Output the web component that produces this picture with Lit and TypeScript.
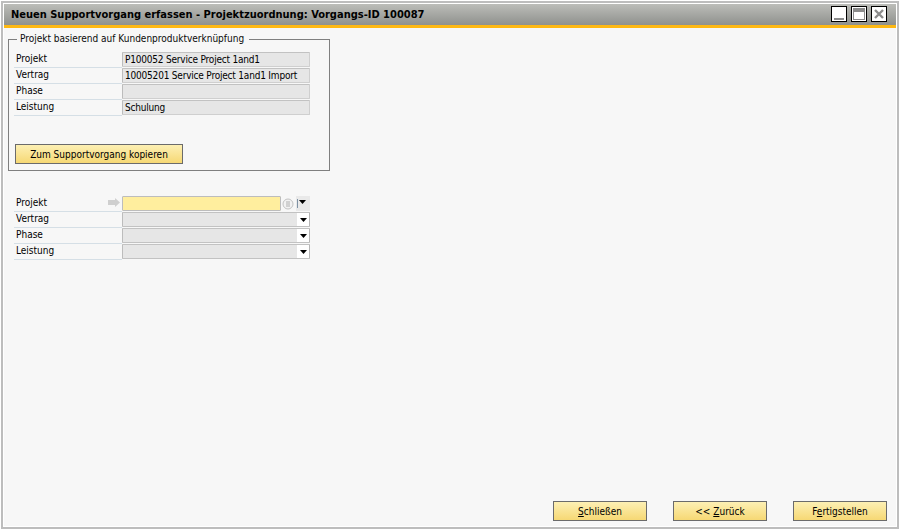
import { LitElement, html, css } from "lit";
import { customElement } from "lit/decorators.js";

const arrow = html`<svg class="dd" width="7" height="4" viewBox="0 0 7 4"><path d="M0 0H7L3.5 4Z" fill="#000"/></svg>`;

@customElement("app-root")
export class AppRoot extends LitElement {
  static styles = css`
    :host { display: block; width: 900px; height: 530px; background: #fff; font-family: "DejaVu Sans Condensed", "DejaVu Sans", sans-serif; font-stretch: condensed; font-size: 10px; color: #000; }
    * { box-sizing: border-box; }
    .win { width: 898px; height: 528px; margin: 1px 0 0 1px; border: 2px solid #bdbdbd; padding: 1px 1px 1px 1px; display: flex; flex-direction: column; background: #fff; }
    .title { height: 24px; flex: none; background: linear-gradient(#bcbdb9, #8f918d); border-bottom: 3px solid #fdb813; display: flex; align-items: center; padding: 0 9px 0 7px; }
    .title h1 { margin: 0; flex: 1; font-size: 11px; font-weight: bold; white-space: nowrap; }
    .wb { display: flex; gap: 4px; margin-top: -1px; }
    .wb svg { display: block; }
    .body { flex: 1; background: #f7f7f7; display: flex; flex-direction: column; padding: 5px 8px 5px 4px; }
    fieldset { margin: 0; width: 322px; height: 138px; border: 1px solid #7f7f7f; padding: 7px 19px 0 5px; display: flex; flex-direction: column; }
    legend { margin-left: 3px; padding: 0 5px 0 3px; color: #0a0a0a; font-size: 10px; line-height: 12px; }
    .row { display: flex; height: 16px; }
    .lab { width: 108px; padding: 0 0 0 2px; border-bottom: 1px solid #d5dfe6; line-height: 13px; display: flex; justify-content: space-between; }
    .fld { width: 188px; height: 15px; background: #e6e6e6; border: 1px solid #cfcfcf; border-top-color: #c2c2c2; border-left-color: #bcbcbc; border-radius: 1px; padding: 0 2px; line-height: 13px; letter-spacing: -0.2px; white-space: nowrap; overflow: hidden; position: relative; }
    .copy { margin-top: 28px; margin-left: 1px; }
    .btn { width: 168px; height: 20px; border: 1px solid #6b6b6b; background: linear-gradient(#fdf0b4, #f6d874); display: flex; align-items: center; justify-content: center; font-size: 10px; }
    .form { margin-top: 25px; margin-left: 6px; width: 296px; display: flex; flex-direction: column; }
    .gold { background: #ffee9e; border-color: #bdbdbd; width: 159px; }
    .sel { padding-right: 0; border-right-color: #b5b5b5; border-bottom-color: #c2c2c2; }
    .drop { position: absolute; right: 0; top: 0; width: 12px; height: 13px; background: #fff; display: flex; align-items: center; justify-content: center; }
    .dd { display: block; }
    .tools { width: 29px; height: 15px; display: flex; align-items: center; background: linear-gradient(90deg, #f7f7f7 50%, #e9e9e9 50%); }
    .tools .ic { margin-left: 1px; }
    .tools .bar { width: 1px; height: 9px; background: #7f93a5; margin: -1px 1px 0 3px; }
    .tools .dd { margin-top: -3px; }
    .foot { margin-top: auto; display: flex; justify-content: flex-end; gap: 26px; padding-right: 1px; }
    .foot .btn { width: 94px; }
    .arr { margin: 2px 2px 0 0; }
    u { text-underline-offset: 1px; }
  `;
  row(label: string, val: string) {
    return html`<div class="row"><div class="lab">${label}</div><div class="fld">${val}</div></div>`;
  }
  sel(label: string) {
    return html`<div class="row"><div class="lab">${label}</div><div class="fld sel"><span class="drop">${arrow}</span></div></div>`;
  }
  render() {
    return html`<div class="win">
      <div class="title">
        <h1>Neuen Supportvorgang erfassen - Projektzuordnung: Vorgangs-ID 100087</h1>
        <div class="wb">
          <svg width="16" height="16" viewBox="0 0 16 16"><rect x=".5" y=".5" width="15" height="15" fill="#fff" stroke="#000"/><rect x="3" y="12" width="10" height="2" fill="#8c8c8c"/></svg>
          <svg width="16" height="16" viewBox="0 0 16 16"><rect x=".5" y=".5" width="15" height="15" fill="#fff" stroke="#000"/><rect x="2.5" y="2.5" width="11" height="11" fill="#fff" stroke="#8c8c8c"/><rect x="3" y="3" width="10" height="3" fill="#8c8c8c"/></svg>
          <svg width="16" height="16" viewBox="0 0 16 16"><rect x=".5" y=".5" width="15" height="15" fill="#fff" stroke="#000"/><path d="M4 4L12 12M12 4L4 12" stroke="#8c8c8c" stroke-width="2.4"/></svg>
        </div>
      </div>
      <div class="body">
        <fieldset>
          <legend>Projekt basierend auf Kundenproduktverknüpfung</legend>
          ${this.row("Projekt", "P100052 Service Project 1and1")}
          ${this.row("Vertrag", "10005201 Service Project 1and1 Import")}
          ${this.row("Phase", "")}
          ${this.row("Leistung", "Schulung")}
          <div class="btn copy">Zum Supportvorgang kopieren</div>
        </fieldset>
        <div class="form">
          <div class="row">
            <div class="lab">Projekt
              <svg class="arr" width="12" height="9" viewBox="0 0 12 9"><path d="M0 2H7V0L12 4.5L7 9V7H0Z" fill="#cfcfcf"/></svg>
            </div>
            <div class="fld gold"></div>
            <div class="tools">
              <svg class="ic" width="12" height="12" viewBox="0 0 12 12"><circle cx="6" cy="6" r="5" fill="#f2f2f2" stroke="#c2c2c2"/><path d="M4 4H8M4 6H8M4 8H8" stroke="#b0b0b0"/></svg>
              <span class="bar"></span>${arrow}
            </div>
          </div>
          ${this.sel("Vertrag")}
          ${this.sel("Phase")}
          ${this.sel("Leistung")}
        </div>
        <div class="foot">
          <div class="btn"><span><u>S</u>chließen</span></div>
          <div class="btn"><span>&lt;&lt; <u>Z</u>urück</span></div>
          <div class="btn"><span>F<u>e</u>rtigstellen</span></div>
        </div>
      </div>
    </div>`;
  }
}
